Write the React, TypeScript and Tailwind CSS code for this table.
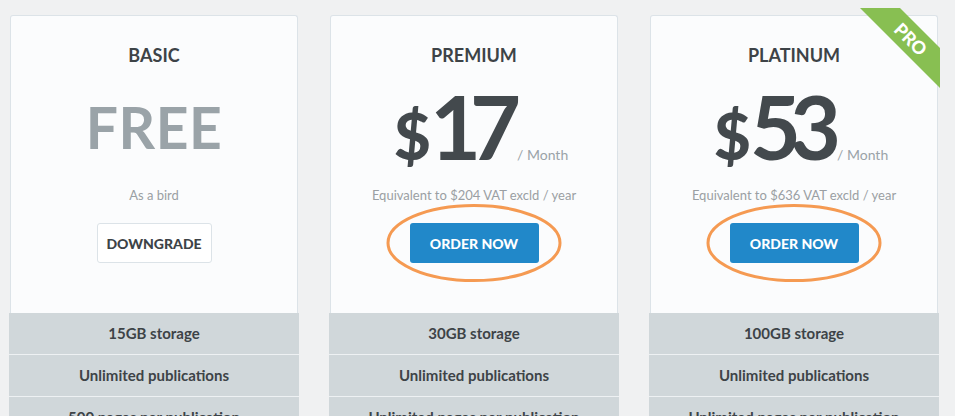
const plans = [
  {
    name: "BASIC",
    free: true,
    note: "As a bird",
    features: ["15GB storage", "Unlimited publications", "500 pages per publication", "Basic statistics"],
  },
  {
    name: "PREMIUM",
    price: "17",
    note: "Equivalent to $204 VAT excld / year",
    features: ["30GB storage", "Unlimited publications", "Unlimited pages per publication", "Advanced statistics"],
  },
  {
    name: "PLATINUM",
    price: "53",
    note: "Equivalent to $636 VAT excld / year",
    pro: true,
    features: ["100GB storage", "Unlimited publications", "Unlimited pages per publication", "Advanced statistics"],
  },
];

function Circled({ children }: { children: React.ReactNode }) {
  return (
    <div className="relative">
      {children}
      <svg
        className="pointer-events-none absolute left-1/2 top-1/2 -translate-x-1/2 -translate-y-1/2"
        width="180"
        height="82"
        viewBox="0 0 180 82"
      >
        <ellipse cx="90" cy="41" rx="86" ry="37.5" fill="none" stroke="#f59a52" strokeWidth="3" />
      </svg>
    </div>
  );
}

function ProRibbon() {
  return (
    <svg className="absolute left-[211px] top-[-7px]" width="80" height="80" viewBox="0 0 80 80">
      <polygon points="0,0 40,0 80,40 80,80" fill="#88bf52" />
      <text
        x="51"
        y="31"
        transform="rotate(45 51 31)"
        textAnchor="middle"
        dominantBaseline="central"
        fill="#fff"
        fontSize="18"
        fontWeight="900"
        fontFamily="Lato, 'Open Sans', sans-serif"
      >
        PRO
      </text>
    </svg>
  );
}

export default function App() {
  return (
    <div className="min-h-[416px] overflow-hidden bg-[#f0f1f2] pl-[9px] pt-[15px] font-['Lato',sans-serif]">
      <div className="flex gap-[30px]">
        {plans.map((p) => (
          <div key={p.name} className="relative w-[290px] shrink-0">
            <div className="mx-px flex flex-col items-center rounded-t-[3px] border border-b-0 border-[#dce3e8] bg-[#fbfcfd] pb-[50px]">
              <h2 className="mt-[27px] text-[18px] font-bold leading-[24px] text-[#3d4347]">{p.name}</h2>
              <div className="flex h-[103px] items-end justify-center">
                {p.free ? (
                  <span className="mb-[14px] text-[57px] font-bold leading-none tracking-[0.5px] text-[#9aa3a8]">FREE</span>
                ) : (
                  <div className="ml-[14px] flex items-baseline leading-none text-[#43494d]">
                    <span className="mr-[-1px] text-[64px] font-black">$</span>
                    <span className="text-[88px] font-bold tracking-[-11px]">{p.price}</span>
                    <span className="ml-[7px] text-[14px] text-[#9aa3a8]">/ Month</span>
                  </div>
                )}
              </div>
              <p className="mt-[15px] text-[13px] leading-[20px] text-[#9a9fa3]">{p.note}</p>
              <div className="mt-[18px]">
                {p.free ? (
                  <button className="h-[40px] w-[115px] rounded-[3px] border border-[#dce3e8] bg-white text-[14px] font-black text-[#3d4347]">
                    DOWNGRADE
                  </button>
                ) : (
                  <Circled>
                    <button className="h-[40px] w-[129px] rounded-[3px] bg-[#2188c9] text-[14px] font-black text-white">
                      ORDER NOW
                    </button>
                  </Circled>
                )}
              </div>
            </div>
            {p.pro && <ProRibbon />}
            <ul>
              {p.features.map((f) => (
                <li
                  key={f}
                  className="flex h-[42px] items-center justify-center border-b border-[#eef1f3] bg-[#d0d7da] pb-px text-[15px] font-bold text-[#3d4347]"
                >
                  {f}
                </li>
              ))}
            </ul>
          </div>
        ))}
      </div>
    </div>
  );
}
